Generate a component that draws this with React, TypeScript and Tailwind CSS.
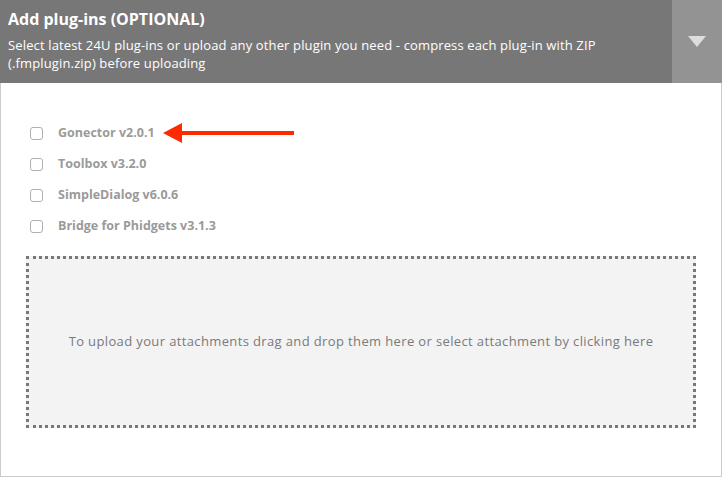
const plugins = [
  "Gonector v2.0.1",
  "Toolbox v3.2.0",
  "SimpleDialog v6.0.6",
  "Bridge for Phidgets v3.1.3",
];

function RedArrow() {
  return (
    <svg width="134" height="22" viewBox="0 0 134 22" className="ml-[8px] shrink-0">
      <polygon points="0,11 19,1 19,21" fill="#ff2a00" />
      <rect x="16" y="9" width="115" height="4" fill="#ff2a00" />
    </svg>
  );
}

export default function App() {
  return (
    <div
      className="w-[722px] h-[478px] bg-white flex flex-col"
      style={{ fontFamily: '"Open Sans", "Liberation Sans", sans-serif' }}
    >
      {/* header */}
      <div className="flex h-[83px] bg-[#777777] shrink-0">
        <div className="flex-1 px-[8px] pt-[8px] text-white">
          <p className="m-0 text-[16px] font-bold leading-[22px]">
            Add plug-ins (OPTIONAL)
          </p>
          <p className="m-0 mt-[6px] text-[13px] leading-[18px] tracking-[0.14px] pr-[40px]">
            Select latest 24U plug-ins or upload any other plugin you need - compress each plug-in with ZIP (.fmplugin.zip) before uploading
          </p>
        </div>
        <div className="w-[50px] bg-[#939393] flex items-center justify-center">
          <svg width="18" height="11" viewBox="0 0 18 11">
            <polygon points="0,0 18,0 9,11" fill="#dddddd" />
          </svg>
        </div>
      </div>

      {/* body */}
      <div className="flex-1 border border-t-0 border-[#cccccc] mb-[1px] px-[25px] pt-[41px]">
        <ul className="m-0 p-0 flex flex-col gap-[13px] pl-[4px]">
          {plugins.map((p, i) => (
            <li key={p} className="flex items-center h-[18px]">
              <span className="w-[13px] h-[13px] border border-[#b0b0b0] rounded-[3px] bg-white shrink-0" />
              <span className="ml-[15px] text-[12.5px] font-bold text-[#9a9a9a]">{p}</span>
              {i === 0 && <RedArrow />}
            </li>
          ))}
        </ul>

        <div className="mt-[21px] h-[172px] border-[3px] border-dotted border-[#777777] bg-[#f3f3f3] flex items-center justify-center">
          <p className="m-0 text-[13px] tracking-[0.37px] text-[#7a7a7a]">
            To upload your attachments drag and drop them here or select attachment by clicking here
          </p>
        </div>
      </div>
    </div>
  );
}
